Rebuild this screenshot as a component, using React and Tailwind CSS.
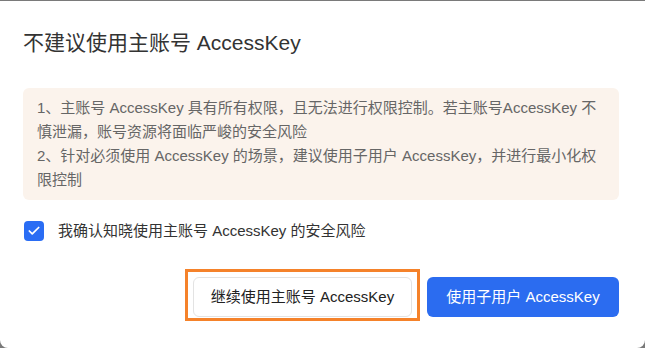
import { Check } from "lucide-react"

const font = { fontFamily: '"Liberation Sans", "Noto Sans CJK SC", sans-serif' }

export default function App() {
  return (
    <div className="w-[645px] h-[348px] bg-[#7a7a7a] pt-px overflow-hidden" style={font}>
      <div className="h-[347px] bg-white rounded-bl-[8px] rounded-br-[8px] pl-[23px] pr-[26px] pt-[28px]">
        <h1 className="text-[21px] leading-[28px] text-[#333]">不建议使用主账号 AccessKey</h1>

        <div className="mt-[31px] bg-[#fbf3ec] rounded-[6px] px-[14px] py-[8px] text-[15px] leading-[24px] text-[#666]">
          <p>1、主账号 AccessKey 具有所有权限，且无法进行权限控制。若主账号AccessKey 不慎泄漏，账号资源将面临严峻的安全风险</p>
          <p>2、针对必须使用 AccessKey 的场景，建议使用子用户 AccessKey，并进行最小化权限控制</p>
        </div>

        <label className="mt-[21px] flex items-center gap-[14px] pl-px">
          <span className="w-[20px] h-[20px] rounded-[4px] bg-[#2a6df4] flex items-center justify-center">
            <Check className="w-[14px] h-[14px] text-white" strokeWidth={3} />
          </span>
          <span className="text-[15px] leading-[20px] text-[#333]">我确认知晓使用主账号 AccessKey 的安全风险</span>
        </label>

        <div className="mt-[36px] flex justify-end gap-[15px]">
          <div className="relative">
            <button
              type="button"
              className="h-[40px] w-[219px] rounded-[6px] border border-[#e3e3e3] bg-white text-[15px] text-[#222]"
            >
              继续使用主账号 AccessKey
            </button>
            <span className="absolute -left-[8px] -right-[8px] -top-[8px] -bottom-[4px] border-[3px] border-[#f5822a] pointer-events-none" />
          </div>
          <button
            type="button"
            className="h-[40px] w-[192px] rounded-[6px] bg-[#2b6cf0] text-[15px] text-white"
          >
            使用子用户 AccessKey
          </button>
        </div>
      </div>
    </div>
  )
}
